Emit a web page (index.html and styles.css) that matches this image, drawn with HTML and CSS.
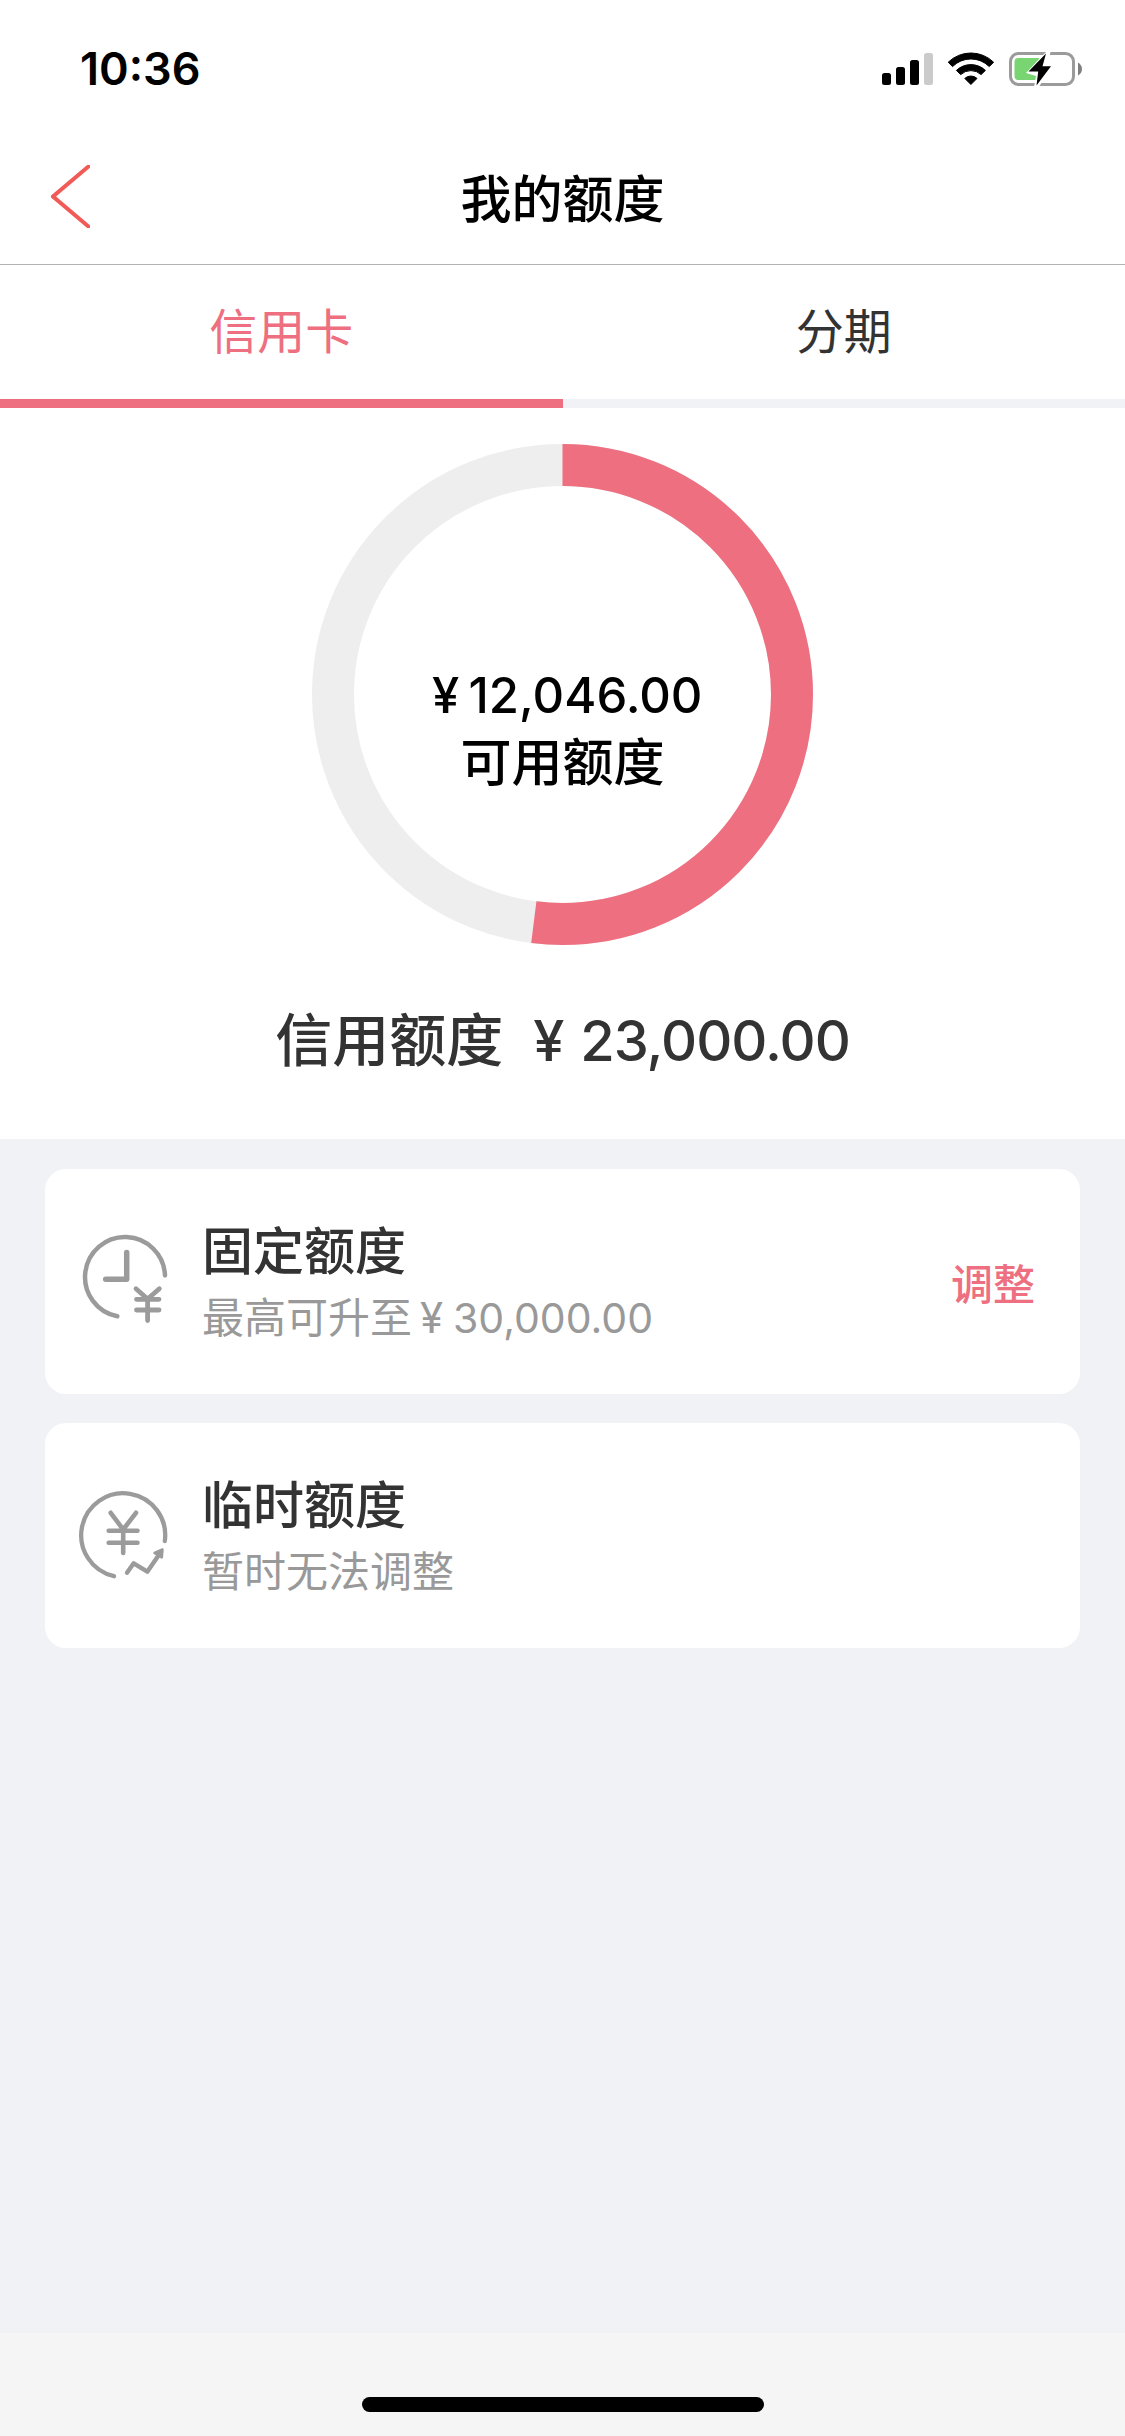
FILE: index.html
```html
<!DOCTYPE html>
<html lang="zh-CN">
<head>
<meta charset="utf-8">
<title>我的额度</title>
<link rel="stylesheet" href="styles.css">
</head>
<body>
<div class="screen">
  <div class="status">
    <span class="time">10:36</span>
    <svg class="status-icons" width="202" height="36" viewBox="881 51 202 36">
      <rect x="882" y="73" width="9" height="12" rx="2.5"/>
      <rect x="896" y="67" width="9" height="18" rx="2.5"/>
      <rect x="910" y="60" width="9" height="25" rx="2.5"/>
      <rect x="924" y="53" width="9" height="32" rx="2.5" fill="#cbcbcb"/>
      <path d="M948.2 62.2A32.6 32.6 0 0 1 993.6 62.2L989.3 66.6A26 26 0 0 0 952.5 66.6Z" stroke="#000" stroke-width="1" stroke-linejoin="round"/>
      <path d="M956.4 70.4A21 21 0 0 1 985.4 70.4L981.1 74.6A15 15 0 0 0 960.7 74.6Z" stroke="#000" stroke-width="1" stroke-linejoin="round"/>
      <path d="M964.8 78.4A9 9 0 0 1 977 78.4L970.9 84.5Z" stroke="#000" stroke-width="1" stroke-linejoin="round"/>
      <rect x="1010.5" y="53.5" width="63" height="31" rx="8" fill="none" stroke="#9b9b9b" stroke-width="3"/>
      <rect x="1014.5" y="58" width="27" height="22" rx="4" fill="#78d572"/>
      <path d="M1078 62.5Q1082 65 1082 69T1078 75.5Z" fill="#808080"/>
      <path d="M1040 58L1048 50H1051L1048 63H1043V80L1039 87H1034L1036 76L1026 73Z" fill="#fff"/>
      <path d="M1046 53.5L1028.5 71.5H1038.2L1036.5 85.5L1051 66.3H1042.5Z"/>
    </svg>
  </div>
  <div class="nav">
    <svg class="back" width="39" height="63" viewBox="0 0 39 63"><path d="M41 -1.5L2 31.5L41 64.5" fill="none" stroke="#f15b57" stroke-width="4"/></svg>
    <div class="title">我的额度</div>
  </div>
  <div class="tabs">
    <div class="tab active">信用卡</div>
    <div class="tab">分期</div>
  </div>
  <div class="summary">
    <div class="ring">
      <svg class="ring-chart" width="501" height="501" viewBox="0 0 501 501">
        <g fill="none" stroke-width="42" transform="rotate(-90 250.5 250.5)">
          <circle cx="250.5" cy="250.5" r="229.5" stroke="#eee"/>
          <circle cx="250.5" cy="250.5" r="229.5" stroke="#ed6f80" pathLength="100" stroke-dasharray="52 48"/>
        </g>
      </svg>
      <div class="ring-text">
        <div class="available"><span class="yen">¥</span>12,046.00</div>
        <div class="caption">可用额度</div>
      </div>
    </div>
    <div class="credit"><span>信用额度</span><span class="credit-amount"><span class="yen">¥</span>23,000.00</span></div>
  </div>
  <div class="cards">
    <div class="card">
      <svg class="icon" width="96" height="96" viewBox="77 1234 96 96" fill="none" stroke="#9b9b9b" stroke-linecap="round" stroke-linejoin="round">
        <path d="M165 1275.5A40 40 0 1 0 117.3 1316.3" stroke-width="4.5"/>
        <path d="M126.7 1252.5V1279.2H105.7" stroke-width="5.5"/>
        <path d="M136 1288.7L147.6 1299L159.3 1288.7M147.6 1299V1320.5M136.5 1299.3H159M136.5 1310H159" stroke-width="4.8"/>
      </svg>
      <div class="info">
        <div class="name">固定额度</div>
        <div class="desc">最高可升至<span class="yen">¥</span><span class="num">30,000.00</span></div>
      </div>
      <div class="action">调整</div>
    </div>
    <div class="card">
      <svg class="icon" width="96" height="96" viewBox="77 1488 96 96" fill="none" stroke="#9b9b9b" stroke-linecap="round" stroke-linejoin="round">
        <path d="M164.8 1541A42 42 0 1 0 114 1576.2" stroke-width="4.3"/>
        <path d="M110.7 1512.8L123.2 1529.5L136 1512.8M123.2 1529.5V1553M108.7 1530.7H137.5M108.7 1542.7H137.5" stroke-width="4.6"/>
        <path d="M127 1572.8L133.7 1563.3L147.3 1571.7L159.5 1554" stroke-width="4.4"/>
        <path d="M162.5 1549.5L161.8 1557.5L154.5 1553Z" fill="#9b9b9b" stroke-width="2.5"/>
      </svg>
      <div class="info">
        <div class="name">临时额度</div>
        <div class="desc">暂时无法调整</div>
      </div>
    </div>
  </div>
  <div class="footer"><div class="home"></div></div>
</div>
</body>
</html>
```
FILE: styles.css
```css
* { box-sizing: border-box; }
body {
  margin: 0;
  background: #f1f2f6;
  color: #333;
  font-family: Inter, "Noto Sans CJK SC", sans-serif;
}
svg { display: block; flex: none; }
.screen {
  display: flex;
  flex-direction: column;
  width: 1125px;
  height: 2436px;
}
.status {
  display: flex;
  justify-content: space-between;
  height: 132px;
  padding: 0 42px 0 80px;
  background: #fff;
}
.time {
  padding-top: 42px;
  color: #000;
  font-size: 45px;
  line-height: 54px;
  font-weight: 600;
}
.status-icons { margin-top: 51px; }
.nav {
  display: grid;
  grid-template-columns: 1fr auto 1fr;
  align-items: start;
  height: 133px;
  padding: 33px 51px 0;
  border-bottom: 1px solid #b2b2b2;
  background: #fff;
}
.title {
  padding-top: 5px;
  color: #000;
  font-size: 51px;
  line-height: 60px;
  font-weight: 500;
}
.tabs {
  display: flex;
  height: 143px;
  background: #fff;
}
.tab {
  flex: 1;
  border-bottom: 9px solid #f1f2f6;
  font-size: 48px;
  line-height: 134px;
  text-align: center;
}
.tab.active {
  border-color: #ed6f80;
  color: #ed6f80;
}
.summary {
  display: flex;
  flex-direction: column;
  align-items: center;
  height: 731px;
  padding-top: 36px;
  background: #fff;
}
.ring { display: grid; }
.ring-chart, .ring-text { grid-area: 1 / 1; }
.ring-text {
  padding-top: 218px;
  color: #000;
  font-size: 51px;
  font-weight: 500;
  text-align: center;
}
.available {
  font-size: 49px;
  line-height: 67px;
}
.caption { line-height: 68px; }
.yen { display: inline-block; }
.available .yen { width: 46px; }
.credit {
  display: flex;
  align-items: center;
  gap: 30px;
  margin-top: 61px;
  font-size: 57px;
  line-height: 70px;
  font-weight: 500;
}
.credit-amount {
  font-size: 56px;
  font-weight: 450;
  letter-spacing: -1px;
}
.credit .yen { width: 47px; }
.cards {
  display: flex;
  flex-direction: column;
  flex: 1;
  gap: 29px;
  padding: 30px 45px 0;
}
.card {
  display: flex;
  height: 225px;
  padding: 0 45px 0 32px;
  border-radius: 21px;
  background: #fff;
}
.icon { margin-top: 65px; }
.info {
  flex: 1;
  padding: 50px 0 0 29px;
}
.name {
  font-size: 51px;
  line-height: 66px;
  font-weight: 500;
}
.desc {
  color: #999;
  font-size: 42px;
  line-height: 66px;
}
.desc .yen { width: 41px; padding-left: 8px; }
.num { font-size: 41px; }
.action {
  color: #ed6f80;
  font-size: 42px;
  line-height: 232px;
  font-weight: 500;
}
.footer {
  height: 103px;
  padding-top: 64px;
  background: #f5f5f5;
}
.home {
  width: 402px;
  height: 15px;
  margin: 0 auto;
  border-radius: 8px;
  background: #000;
}
```
